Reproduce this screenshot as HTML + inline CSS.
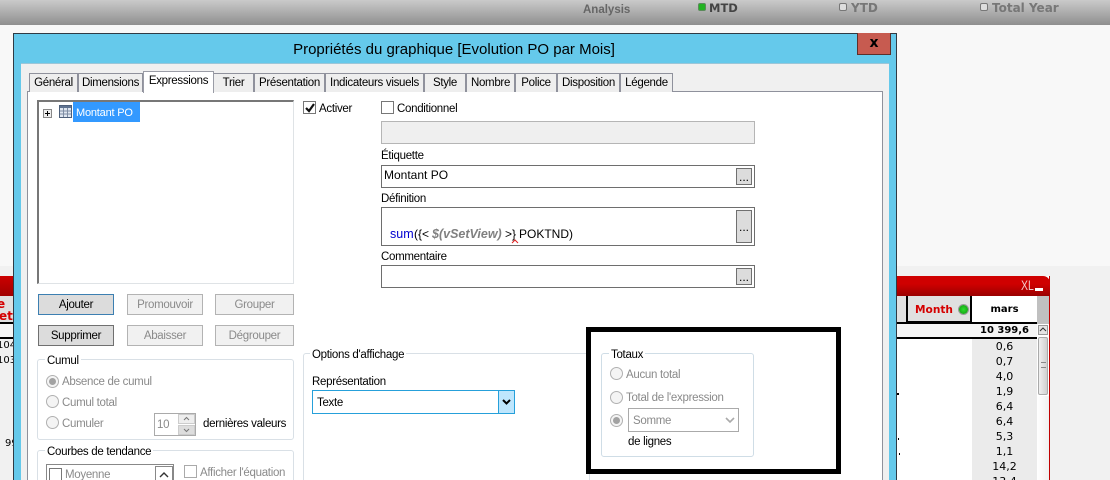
<!DOCTYPE html>
<html><head><meta charset="utf-8"><style>
html,body{margin:0;padding:0;width:1110px;height:480px;overflow:hidden}
#w{position:absolute;left:0;top:0;width:1110px;height:480px;overflow:hidden;background:#f8f8f8;font-family:"Liberation Sans",sans-serif;font-size:11.5px;letter-spacing:-.3px;color:#000}
#w div{position:absolute;box-sizing:border-box}
.t{white-space:nowrap;line-height:16px}
#w .d{font-family:"DejaVu Sans",sans-serif;letter-spacing:0;line-height:14px}
.g{color:#8a8a8a}
#w .tab{top:73px;height:19px;background:#eeeeee;border:1px solid #8f919c;border-bottom:none;text-align:center;line-height:19px;white-space:nowrap}
.in{background:#fff;border:1px solid #6e6e6e}
.dots{background:#dcdcdc;border:1px solid #707070;text-align:center;font-size:12px;line-height:18px;letter-spacing:0}
.btn{height:21px;width:76px;background:#f1f1f1;border:1px solid #b3b3b3;text-align:center;line-height:21px;color:#8a8a8a}
.fs{border:1px solid #d9e0e6;border-radius:3px}
.leg{background:#fff;padding:0 2px;white-space:nowrap;line-height:16px;height:14px}
.r{width:13px;height:13px;border:1px solid #b0b0b0;border-radius:50%;background:#f4f4f4}
.r.on:after{content:"";position:absolute;left:2px;top:2px;width:7px;height:7px;border-radius:50%;background:#a2a2a2}
.v{left:972px;width:65px;text-align:center;font-family:"DejaVu Sans",sans-serif;letter-spacing:0;font-size:11px;line-height:15px}
</style></head><body><div id="w">
<div style="left:0;top:0;width:1110px;height:25px;background:linear-gradient(#cacaca,#8f8f8f)"></div>
<div style="left:0;top:266px;width:1110px;height:214px;background:#f1f1f1"></div>
<div class="t" style="left:583px;top:2px;font-weight:bold;color:#666;letter-spacing:0;font-size:11.5px">Analysis</div>
<div style="left:698px;top:3px;width:8px;height:8px;background:#22b322;border:1px solid #5a8a5a;border-radius:2px"></div>
<div class="t d" style="left:709px;top:1px;font-weight:bold;font-size:11.5px;color:#444">MTD</div>
<div style="left:839px;top:3px;width:8px;height:8px;background:#ddd;border:1px solid #777;border-radius:2px"></div>
<div class="t d" style="left:851px;top:1px;font-weight:bold;font-size:12px;color:#777">YTD</div>
<div style="left:980px;top:3px;width:8px;height:8px;background:#ddd;border:1px solid #777;border-radius:2px"></div>
<div class="t d" style="left:992px;top:1px;font-weight:bold;font-size:12px;color:#777">Total Year</div>

<!-- left table -->
<div style="left:0;top:276px;width:14px;height:20px;background:linear-gradient(#cc0000,#a00000)"></div>
<div style="left:0;top:296px;width:14px;height:28px;background:#e0e0e0;border-bottom:2px solid #000"></div>
<div class="t d" style="left:-3px;top:297px;color:#d40000;font-weight:bold;font-size:12px">e</div>
<div class="t d" style="left:-1px;top:309px;color:#d40000;font-weight:bold;font-size:12px">et</div>
<div style="left:0;top:324px;width:14px;height:15px;background:#f5f5f5;border-bottom:2px solid #000"></div>
<div style="left:0;top:339px;width:13px;height:30px;overflow:hidden">
<div class="t d" style="left:-3px;top:0;font-size:10px">104</div>
<div class="t d" style="left:-3px;top:15px;font-size:10px">103</div>
</div>
<div class="t d" style="left:5px;top:437px;font-size:10px;width:8px;overflow:hidden">99</div>

<!-- right table -->
<div style="left:897px;top:276px;width:153px;height:204px;background:#fff;border-right:1px solid #c00000"></div>
<div style="left:897px;top:276px;width:153px;height:20px;background:linear-gradient(#cf0000 40%,#9a0000);border-top-right-radius:7px"></div>
<div class="t" style="left:1021px;top:277px;color:#f2c8c8;transform:scaleX(.75);transform-origin:0 0;font-size:14px;letter-spacing:0">XL</div>
<div style="left:1035px;top:288px;width:8px;height:3px;background:#fff"></div>
<div style="left:897px;top:296px;width:75px;height:28px;background:#e0e0e0;border-bottom:2px solid #000"></div>
<div style="left:906px;top:296px;width:66px;height:27px;border-left:2px solid #000;border-right:2px solid #000;border-bottom:2px solid #000"></div>
<div class="t d" style="left:915px;top:303px;color:#d40000;font-weight:bold;font-size:10.6px">Month</div>
<div style="left:959px;top:305px;width:9px;height:9px;border-radius:50%;background:radial-gradient(#2be02b,#109010);box-shadow:0 0 0 1px #999"></div>
<div style="left:972px;top:296px;width:65px;height:28px;background:#fff;border-bottom:2px solid #000"></div>
<div class="t d" style="left:972px;width:65px;text-align:center;top:303px;font-weight:bold;font-size:10px">mars</div>
<div style="left:1037px;top:296px;width:12px;height:28px;background:#c0c0c0"></div>
<div style="left:897px;top:324px;width:140px;height:15px;background:#f5f5f5;border-bottom:2px solid #000"></div>
<div class="t d" style="left:972px;top:324px;width:65px;text-align:center;font-weight:bold;font-size:10px">10&nbsp;399,6</div>
<div style="left:972px;top:339px;width:65px;height:141px;background:#ebebeb"></div>
<div class="v" style="top:339px">0,6</div>
<div class="v" style="top:354px">0,7</div>
<div class="v" style="top:369px">4,0</div>
<div class="v" style="top:384px">1,9</div>
<div class="v" style="top:399px">6,4</div>
<div class="v" style="top:414px">6,4</div>
<div class="v" style="top:429px">5,3</div>
<div class="v" style="top:444px">1,1</div>
<div class="v" style="top:459px">14,2</div>
<div class="v" style="top:474px">13,4</div>
<div style="left:897px;top:393px;width:2px;height:2px;background:#000"></div>
<div style="left:898px;top:438px;width:1px;height:2px;background:#000"></div>
<div style="left:899px;top:453px;width:1px;height:2px;background:#000"></div>
<div style="left:1038px;top:325px;width:10px;height:10px;background:#e4e4e4;border:1px solid #999"></div>
<svg style="position:absolute;left:1039px;top:326px" width="8" height="8"><path d="M1 5l3-3 3 3" stroke="#333" fill="none"/></svg>
<div style="left:1038px;top:337px;width:10px;height:58px;background:linear-gradient(90deg,#f0f0f0,#d0d0d0);border:1px solid #aaa;border-radius:2px"></div>
<div style="left:1041px;top:362px;width:5px;height:6px;border-top:1px solid #888;border-bottom:1px solid #888"></div>
<div style="left:1037px;top:396px;width:12px;height:84px;background:linear-gradient(90deg,#fff,#f0f0f0)"></div>

<!-- dialog -->
<div style="left:13px;top:33px;width:884px;height:460px;background:#65c9eb;border:1px solid #2f3a44"></div>
<div class="t" style="left:14px;width:880px;top:41px;text-align:center;font-size:15px;line-height:17px;letter-spacing:0;color:#000">Propriétés du graphique [Evolution PO par Mois]</div>
<div style="left:857px;top:33px;width:34px;height:22px;background:#c75b50;border:1px solid #5d2f2a;border-top:none"></div>
<div class="t d" style="left:857px;width:34px;top:36px;text-align:center;font-weight:bold;font-size:14px">x</div>
<div style="left:21px;top:63px;width:868px;height:420px;background:#f0f0f0;border-top:1px solid #9cc6d8"></div>
<div style="left:27px;top:91px;width:856px;height:392px;background:#fff;border:1px solid #8f919c"></div>

<div class="tab" style="left:29px;width:49px">Général</div>
<div class="tab" style="left:78px;width:65px">Dimensions</div>
<div class="tab" style="left:213px;width:41px">Trier</div>
<div class="tab" style="left:254px;width:71px">Présentation</div>
<div class="tab" style="left:325px;width:99px">Indicateurs visuels</div>
<div class="tab" style="left:424px;width:42px">Style</div>
<div class="tab" style="left:466px;width:49px">Nombre</div>
<div class="tab" style="left:515px;width:42px">Police</div>
<div class="tab" style="left:557px;width:63px">Disposition</div>
<div class="tab" style="left:620px;width:53px">Légende</div>
<div class="tab" style="left:143px;top:71px;width:71px;height:22px;background:#fff;border-color:#9a9ca6">Expressions</div>

<!-- tree -->
<div style="left:37px;top:100px;width:257px;height:184px;background:#fff;border:1px solid #dfe3e6;border-top:2px solid #777;border-left:2px solid #777"></div>
<div style="left:43px;top:109px;width:9px;height:9px;background:#eee;border:1px solid #888"></div>
<div style="left:45px;top:113px;width:5px;height:1px;background:#000"></div>
<div style="left:47px;top:111px;width:1px;height:5px;background:#000"></div>
<svg style="position:absolute;left:59px;top:105px" width="13" height="13"><rect x=".5" y=".5" width="12" height="12" fill="#dfe6f0" stroke="#4d5f7a"/><rect x="1" y="1" width="11" height="2" fill="#5f7391"/><path d="M1 6h11M1 9h11M4.5 3v9M8.5 3v9" stroke="#7d8ca3" fill="none"/></svg>
<div class="t" style="left:73px;top:102px;width:67px;height:20px;background:#3399ff;color:#fff;line-height:22px;padding-left:3px;font-size:11px;letter-spacing:-.2px">Montant PO</div>

<!-- activer -->
<div style="left:303px;top:101px;width:13px;height:13px;border:1px solid #777;background:#fff"></div>
<svg style="position:absolute;left:304px;top:102px" width="12" height="12"><path d="M2 6l3 3 5-7" stroke="#111" stroke-width="2.200" fill="none"/></svg>
<div class="t" style="left:319px;top:101px">Activer</div>
<div style="left:381px;top:101px;width:13px;height:13px;border:1px solid #777;background:#fff"></div>
<div class="t" style="left:397px;top:101px">Conditionnel</div>
<div style="left:381px;top:121px;width:374px;height:23px;background:#efefef;border:1px solid #b5b5b5"></div>
<div class="t" style="left:381px;top:148px">Étiquette</div>
<div class="in" style="left:381px;top:165px;width:374px;height:23px"></div>
<div class="t" style="left:384px;top:167px;font-size:12px;letter-spacing:0">Montant PO</div>
<div class="dots" style="left:736px;top:168px;width:16px;height:17px;line-height:17px">...</div>
<div class="t" style="left:381px;top:191px">Définition</div>
<div class="in" style="left:381px;top:207px;width:374px;height:39px"></div>
<div class="t" style="left:390px;top:226px;font-size:12.500px;letter-spacing:0;color:#0000d0">sum</div>
<div class="t" style="left:414px;top:226px;font-size:12px;letter-spacing:0">({&lt;</div>
<div class="t" style="left:432px;top:226px;font-size:12.500px;letter-spacing:0;color:#808080;font-weight:bold;font-style:italic">$(vSetView)</div>
<div class="t" style="left:505px;top:226px;font-size:12px;letter-spacing:0">&gt;}</div>
<div class="t" style="left:519px;top:226px;font-size:12px;letter-spacing:0">POKTND)</div>
<svg style="position:absolute;left:511px;top:239px" width="8" height="5"><path d="M1 4l3-3 3 3" stroke="#e02020" fill="none"/></svg>
<div class="dots" style="left:736px;top:210px;width:16px;height:33px;line-height:33px">...</div>
<div class="t" style="left:381px;top:249px">Commentaire</div>
<div class="in" style="left:381px;top:265px;width:374px;height:23px"></div>
<div class="dots" style="left:736px;top:268px;width:16px;height:17px;line-height:17px">...</div>

<!-- buttons -->
<div class="btn" style="left:38px;top:294px;background:#dcdcdc;border-color:#3c7fb1;color:#000">Ajouter</div>
<div class="btn" style="left:127px;top:294px">Promouvoir</div>
<div class="btn" style="left:215px;top:294px;width:79px">Grouper</div>
<div class="btn" style="left:38px;top:325px;background:#dcdcdc;border-color:#707070;color:#000">Supprimer</div>
<div class="btn" style="left:127px;top:325px">Abaisser</div>
<div class="btn" style="left:215px;top:325px;width:79px">Dégrouper</div>

<!-- cumul -->
<div class="fs" style="left:37px;top:359px;width:257px;height:81px"></div>
<div class="leg" style="left:45px;top:353px">Cumul</div>
<div class="r on" style="left:46px;top:375px"></div>
<div class="t g" style="left:62px;top:374px">Absence de cumul</div>
<div class="r" style="left:46px;top:395px"></div>
<div class="t g" style="left:62px;top:395px">Cumul total</div>
<div class="r" style="left:46px;top:416px"></div>
<div class="t g" style="left:62px;top:416px">Cumuler</div>
<div style="left:154px;top:413px;width:42px;height:23px;background:#fff;border:1px solid #aaa"></div>
<div class="t g" style="left:157px;top:417px">10</div>
<div style="left:178px;top:414px;width:17px;height:10px;background:#eee;border:1px solid #ccc"></div>
<div style="left:178px;top:425px;width:17px;height:10px;background:#ddd;border:1px solid #ccc"></div>
<svg style="position:absolute;left:178px;top:414px" width="17" height="21"><path d="M6 6l2.500-2.500L11 6M6 15l2.500 2.500L11 15" stroke="#777" fill="none"/></svg>
<div class="t" style="left:203px;top:416px">dernières valeurs</div>

<!-- courbes -->
<div class="fs" style="left:37px;top:450px;width:257px;height:40px"></div>
<div class="leg" style="left:45px;top:444px">Courbes de tendance</div>
<div style="left:46px;top:464px;width:128px;height:30px;background:#fff;border:1px solid #888"></div>
<div style="left:49px;top:468px;width:13px;height:13px;border:1px solid #777;background:#fff"></div>
<div class="t g" style="left:65px;top:467px">Moyenne</div>
<div style="left:155px;top:466px;width:18px;height:18px;background:#fff;border:1px solid #888"></div>
<svg style="position:absolute;left:156px;top:467px" width="16" height="16"><path d="M4 10l4-4 4 4" stroke="#333" stroke-width="1.400" fill="none"/></svg>
<div style="left:184px;top:465px;width:13px;height:13px;border:1px solid #aaa;background:#fff"></div>
<div class="t g" style="left:200px;top:465px">Afficher l'équation</div>

<!-- options -->
<div class="fs" style="left:303px;top:353px;width:300px;height:140px;border-right:none"></div>
<div class="leg" style="left:310px;top:347px">Options d'affichage</div>
<div class="t" style="left:312px;top:374px">Représentation</div>
<div style="left:312px;top:390px;width:203px;height:24px;background:#fff;border:1px solid #26a0da"></div>
<div class="t" style="left:317px;top:395px">Texte</div>
<div style="left:498px;top:390px;width:17px;height:24px;background:#bee6fd;border:1px solid #26a0da"></div>
<svg style="position:absolute;left:499px;top:396px" width="15" height="12"><path d="M4 4l3.500 3.500L11 4" stroke="#000" stroke-width="2" fill="none"/></svg>

<!-- highlight -->
<div style="left:586px;top:327px;width:255px;height:147px;background:#fff;border:5px solid #000"></div>
<div style="left:589px;top:474px;width:1px;height:6px;background:#d9e0e6"></div>
<div class="fs" style="left:601px;top:353px;width:153px;height:104px;border-color:#cfdde6"></div>
<div class="leg" style="left:609px;top:347px">Totaux</div>
<div class="r" style="left:610px;top:367px"></div>
<div class="t g" style="left:626px;top:367px">Aucun total</div>
<div class="r" style="left:610px;top:391px"></div>
<div class="t g" style="left:626px;top:390px">Total de l'expression</div>
<div class="r on" style="left:610px;top:414px"></div>
<div style="left:628px;top:408px;width:111px;height:24px;background:#fff;border:1px solid #aaa"></div>
<div class="t g" style="left:633px;top:413px">Somme</div>
<svg style="position:absolute;left:724px;top:414px" width="12" height="12"><path d="M2 4l4 4 4-4" stroke="#aaa" stroke-width="1.600" fill="none"/></svg>
<div class="t" style="left:628px;top:434px">de lignes</div>
</div></body></html>
